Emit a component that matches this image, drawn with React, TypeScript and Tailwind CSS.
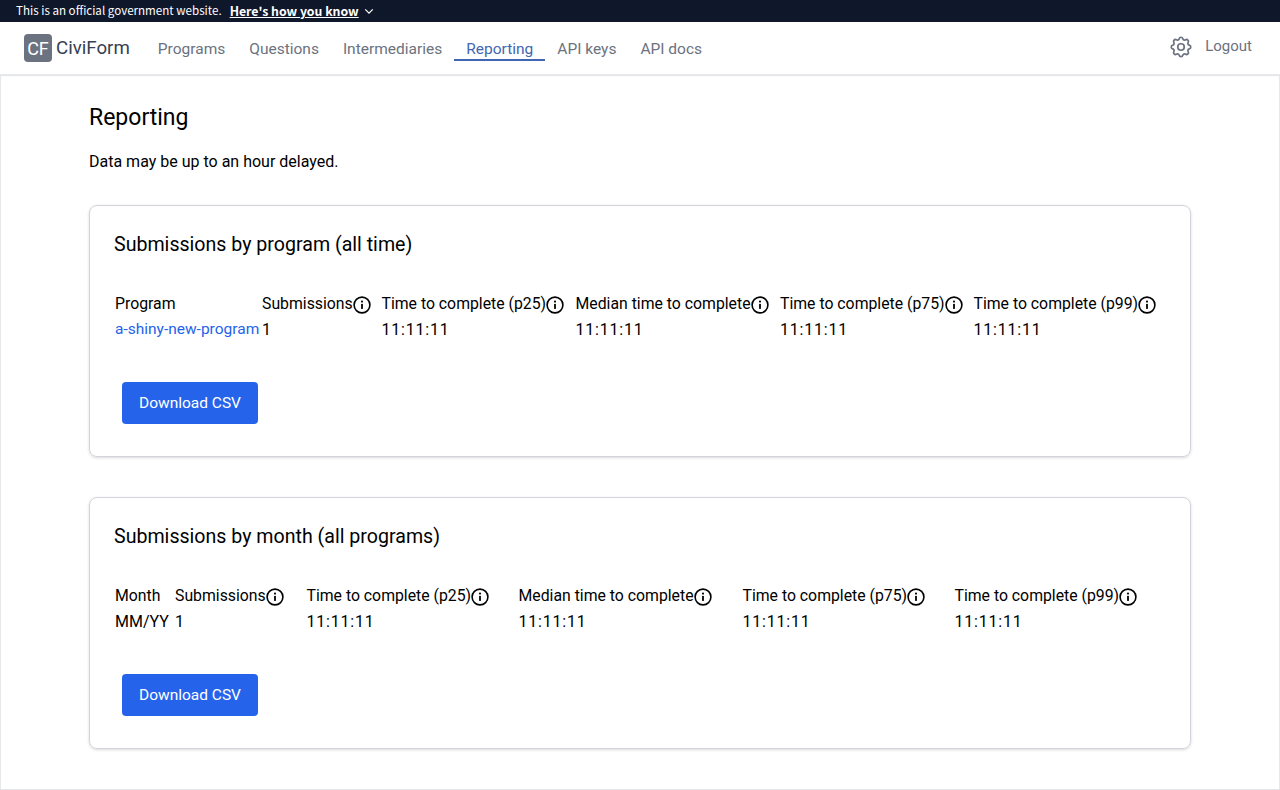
import React from "react";

function Info() {
  return (
    <svg viewBox="0 0 18 18" className="w-[18px] h-[18px] shrink-0 mt-[1px]" fill="none">
      <circle cx="9" cy="9" r="7.9" stroke="#000" strokeWidth="1.6" />
      <circle cx="9" cy="5.6" r="1.05" fill="#000" />
      <rect x="8.1" y="7.9" width="1.8" height="5" fill="#000" />
    </svg>
  );
}

function Head({ label, info = true }: { label: string; info?: boolean }) {
  return (
    <th className="p-0 h-[26px] text-left font-normal whitespace-nowrap text-[15.8px]">
      <span className="flex items-center">
        {label}
        {info && <Info />}
      </span>
    </th>
  );
}

function Time() {
  return <td className="p-0 tracking-[0.8px]">11:11:11</td>;
}

function Card({
  title,
  first,
  firstValue,
  link,
  cols,
  tableClass,
}: {
  title: string;
  first: string;
  firstValue: string;
  link?: boolean;
  cols: number[];
  tableClass: string;
}) {
  return (
    <section className="h-[252px] border border-[#d1d5db] rounded-lg shadow-[0_1px_3px_rgba(0,0,0,0.15)] pl-6 pt-[25px]">
      <h2 className="text-[19.6px] leading-7 text-black">{title}</h2>
      <table className={`mt-[32px] ml-px table-fixed border-collapse text-base text-black ${tableClass}`}>
        <colgroup>
          {cols.map((w, i) => (
            <col key={i} style={{ width: w }} />
          ))}
        </colgroup>
        <thead>
          <tr>
            <Head label={first} info={false} />
            <Head label="Submissions" />
            <Head label="Time to complete (p25)" />
            <Head label="Median time to complete" />
            <Head label="Time to complete (p75)" />
            <Head label="Time to complete (p99)" />
          </tr>
        </thead>
        <tbody>
          <tr className="h-[26px]">
            <td className={`p-0 whitespace-nowrap ${link ? "text-[#2563eb] text-[15.5px]" : ""}`}>{firstValue}</td>
            <td className="p-0">1</td>
            <Time />
            <Time />
            <Time />
            <Time />
          </tr>
        </tbody>
      </table>
      <button className="mt-[39px] ml-2 w-[136px] h-[42px] pt-[2px] rounded bg-[#2563eb] text-white text-[15.5px]">
        Download CSV
      </button>
    </section>
  );
}

export default function App() {
  return (
    <div className="h-[790px] overflow-hidden bg-white flex flex-col font-['Roboto','Liberation_Sans',sans-serif]">
      <div className="h-[22px] shrink-0 bg-[#0f172a] text-white pl-4 flex items-center font-['Noto_Sans_CJK_SC','Noto_Sans',sans-serif]">
        <span className="text-[11.6px]">This is an official government website.</span>
        <span className="ml-2 font-bold underline text-[12.3px]">Here's how you know</span>
        <svg viewBox="0 0 12 12" className="ml-[5px] w-[10px] h-[10px]" fill="none" stroke="#fff" strokeWidth="1.5">
          <path d="M1.5 4l4.5 4.5L10.500 4" />
        </svg>
      </div>
      <header className="h-[53px] shrink-0 flex items-center border-b border-[#e5e7eb] shadow-[0_1px_2px_rgba(0,0,0,0.05)] pl-6 pr-7">
        <div className="w-7 h-7 rounded bg-[#6b7280] text-white text-[18px] flex items-center justify-center">CF</div>
        <span className="ml-1 text-[18.7px] text-[#374151]">CiviForm</span>
        <nav className="ml-4 flex items-center text-[15.5px] text-[#6b7280] h-full pt-[3px]">
          {["Programs", "Questions", "Intermediaries", "Reporting", "API keys", "API docs"].map((n) => (
            <a
              key={n}
              className={`px-3 h-[23px] leading-[22px] flex items-start border-b-2 ${
                n === "Reporting" ? "text-[#4267b2] border-[#4267b2]" : "border-transparent"
              }`}
            >
              {n}
            </a>
          ))}
        </nav>
        <div className="ml-auto flex items-center text-[15px] text-[#6b7280] pb-[3px]">
          <svg viewBox="0 0 24 24" className="w-[26px] h-[26px] mr-[11px]" fill="none" stroke="#6b7280" strokeWidth="1.6" strokeLinecap="round" strokeLinejoin="round">
            <path d="M10.325 4.317c.426-1.756 2.924-1.756 3.35 0a1.724 1.724 0 002.573 1.066c1.543-.94 3.31.826 2.37 2.37a1.724 1.724 0 001.065 2.572c1.756.426 1.756 2.924 0 3.35a1.724 1.724 0 00-1.066 2.573c.94 1.543-.826 3.31-2.37 2.37a1.724 1.724 0 00-2.572 1.065c-.426 1.756-2.924 1.756-3.35 0a1.724 1.724 0 00-2.573-1.066c-1.543.94-3.31-.826-2.37-2.37a1.724 1.724 0 00-1.065-2.572c-1.756-.426-1.756-2.924 0-3.35a1.724 1.724 0 001.066-2.573c-.94-1.543.826-3.31 2.37-2.37.996.608 2.296.07 2.572-1.065z" />
            <circle cx="12" cy="12" r="3" />
          </svg>
          Logout
        </div>
      </header>
      <main className="flex-1 border border-[#e5e7eb] px-[88px] pt-[27px]">
        <h1 className="text-[23px] leading-[30px] text-black">Reporting</h1>
        <p className="mt-[17px] text-base leading-6 text-black">Data may be up to an hour delayed.</p>
        <div className="mt-[31px] flex flex-col gap-10">
          <Card
            title="Submissions by program (all time)"
            first="Program"
            firstValue="a-shiny-new-program"
            link
            cols={[147, 119.5, 194, 204.5, 193.5, 190]}
            tableClass="w-[1048.5px]"
          />
          <Card
            title="Submissions by month (all programs)"
            first="Month"
            firstValue="MM/YY"
            cols={[60, 131.5, 212, 224, 212, 190]}
            tableClass="w-[1029.5px]"
          />
        </div>
      </main>
    </div>
  );
}
